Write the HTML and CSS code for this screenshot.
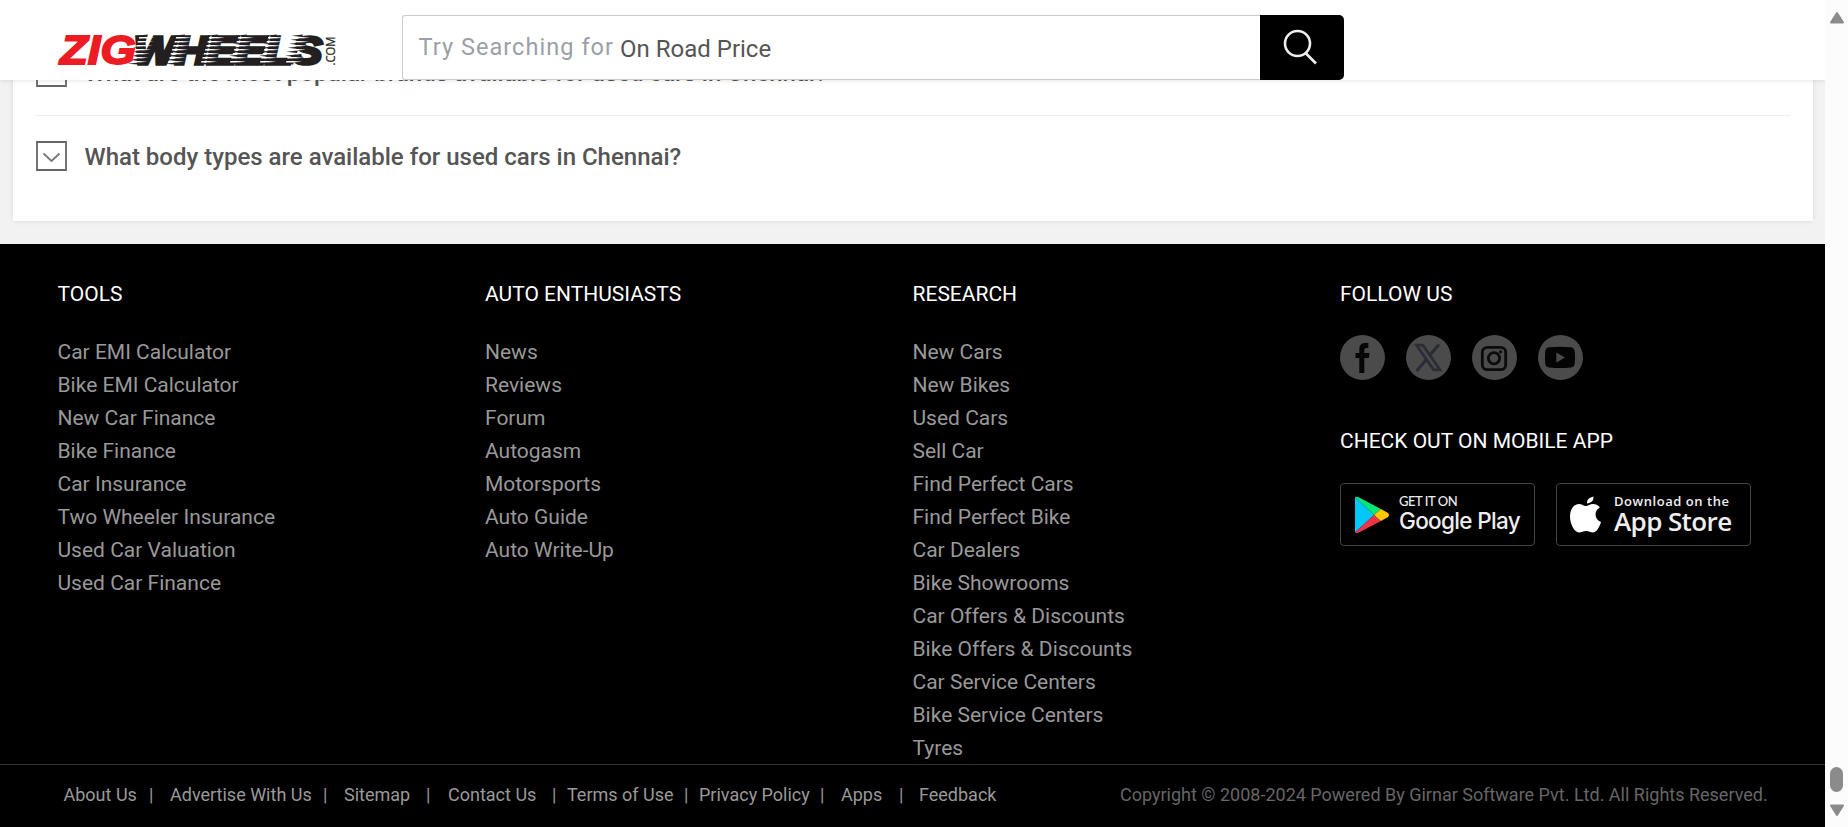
FILE: index.html
```html
<!DOCTYPE html>
<html lang="en">
<head>
<meta charset="utf-8">
<title>Used Cars in Chennai - ZigWheels</title>
<link rel="stylesheet" href="styles.css">
</head>
<body>
<div class="window">
  <div class="page">
    <header class="header">
      <svg class="logo" width="284" height="40" viewBox="0 0 284 40">
        <defs>
          <g id="comb" transform="skewX(-18)">
            <path fill="#fff" d="M-4 2.500H3L12 3.200 3 3.900H-4zM-4 6.500H3L12 7.200 3 7.900H-4zM-4 10.500H3L12 11.200 3 11.900H-4zM-4 14.500H3L12 15.200 3 15.900H-4zM-4 18.500H3L12 19.200 3 19.900H-4zM-4 22.500H3L12 23.200 3 23.900H-4zM-4 26.500H3L12 27.200 3 27.900H-4z"/>
            <path fill="#231f20" d="M-7 1.300 4 0V2.600zM-7 5.300 4 4V6.600zM-7 9.300 4 8V10.600zM-7 13.300 4 12V14.600zM-7 17.300 4 16V18.600zM-7 21.300 4 20V22.600zM-7 25.300 4 24V26.600zM-7 29.300 4 28V30z"/>
          </g>
        </defs>
        <text class="logo-wheels" x="76" y="33.500" textLength="188" lengthAdjust="spacingAndGlyphs">WHEELS</text>
        <use href="#comb" x="86" y="4.500"/><use href="#comb" x="123" y="4.500"/><use href="#comb" x="156" y="4.500"/><use href="#comb" x="185" y="4.500"/><use href="#comb" x="215" y="4.500"/><use href="#comb" x="241" y="4.500"/>
        <text class="logo-zig" x="2" y="34" textLength="76" lengthAdjust="spacingAndGlyphs">ZIG</text>
        <text class="logo-com" transform="translate(277 35.500) rotate(-90)" textLength="29" lengthAdjust="spacingAndGlyphs">.COM</text>
      </svg>
      <div class="search">
        <div class="search-field"><span class="search-hint">Try Searching for</span><span class="search-term">On Road Price</span></div>
        <div class="search-button">
          <svg width="36" height="38" viewBox="0 0 36 38" fill="none" stroke="#eee" stroke-width="2.6"><circle cx="14.5" cy="14.5" r="12.500"/><path d="M22.5 24 33 34.500"/></svg>
        </div>
      </div>
    </header>

    <main class="card">
      <div class="faq">
        <svg class="toggle" viewBox="0 0 31 30"><path d="M1 1H30V29H1z"/></svg>
        <span>What are the most popular brands available for used cars in Chennai?</span>
      </div>
      <div class="faq">
        <svg class="toggle" viewBox="0 0 31 30"><path d="M1 1H30V29H1z"/><path class="chevron" d="M7.500 12.500l8 7.500 8-7.500"/></svg>
        <span>What body types are available for used cars in Chennai?</span>
      </div>
    </main>

    <footer class="footer">
      <div class="columns">
        <section>
          <h3>TOOLS</h3>
          <ul><li>Car EMI Calculator</li><li>Bike EMI Calculator</li><li>New Car Finance</li><li>Bike Finance</li><li>Car Insurance</li><li>Two Wheeler Insurance</li><li>Used Car Valuation</li><li>Used Car Finance</li></ul>
        </section>
        <section>
          <h3>AUTO ENTHUSIASTS</h3>
          <ul><li>News</li><li>Reviews</li><li>Forum</li><li>Autogasm</li><li>Motorsports</li><li>Auto Guide</li><li>Auto Write-Up</li></ul>
        </section>
        <section>
          <h3>RESEARCH</h3>
          <ul><li>New Cars</li><li>New Bikes</li><li>Used Cars</li><li>Sell Car</li><li>Find Perfect Cars</li><li>Find Perfect Bike</li><li>Car Dealers</li><li>Bike Showrooms</li><li>Car Offers &amp; Discounts</li><li>Bike Offers &amp; Discounts</li><li>Car Service Centers</li><li>Bike Service Centers</li><li>Tyres</li></ul>
        </section>
        <section>
          <h3>FOLLOW US</h3>
          <div class="social">
            <svg viewBox="0 0 45 45"><circle cx="22.500" cy="22.500" r="22.500" fill="#4b4b4b"/><path d="M19.300 38V23H15.500V18H19.300V14.500C19.300 10 21.500 8 25.500 8H28.300V13H26.300C24.700 13 24.300 13.700 24.300 15.200V18H29.500L28.800 23H24.300V38z" fill="#060606"/></svg>
            <svg viewBox="0 0 45 45"><circle cx="22.500" cy="22.500" r="22.500" fill="#4b4b4b"/><path d="M10.500 10.200H16.800L34 34.800H27.700z" fill="none" stroke="#2a2d33" stroke-width="2.700"/><path d="M33 9.500 23.500 20.500M20.500 24.500 10.500 36" stroke="#2a2d33" stroke-width="3.200"/></svg>
            <svg viewBox="0 0 45 45"><circle cx="22.500" cy="22.500" r="22.500" fill="#4b4b4b"/><g fill="none" stroke="#0b0b0b" stroke-width="2.800"><rect x="10.300" y="12.300" width="23.400" height="22.400" rx="5"/><circle cx="22" cy="23.300" r="5.600"/></g><circle cx="28.600" cy="16.800" r="1.600" fill="#0b0b0b"/></svg>
            <svg viewBox="0 0 45 45"><circle cx="22.500" cy="22.500" r="22.500" fill="#4b4b4b"/><path d="M11 12.300Q22 11.300 33 12.300Q36.600 12.800 36.800 17Q37.300 22.500 36.800 28Q36.600 32 33 32.500Q22 33.500 11 32.500Q7.400 32 7.200 28Q6.700 22.500 7.200 17Q7.400 12.800 11 12.300z" fill="#040404"/><path d="M18.300 17.500V27.500L27 22.500z" fill="#4b4b4b"/></svg>
          </div>
          <h3 class="app-title">CHECK OUT ON MOBILE APP</h3>
          <div class="apps">
            <div class="badge">
              <svg width="36" height="38" viewBox="14 13 36 38"><path d="M15 14 34 32 15 49.500z" fill="#00c8fa"/><path d="M15 14Q17 13 20 15L41 26 34 32z" fill="#06e678"/><path d="M15 49.500 34 32 41 38 20 49Q17 51 15 49.500z" fill="#ee3448"/><path d="M41 26 48 30Q50 32 48 34L41 38 34 32z" fill="#ffc800"/></svg>
              <div class="badge-text google"><small>GET IT ON</small><b>Google Play</b></div>
            </div>
            <div class="badge">
              <svg width="36" height="38" viewBox="14 12 36 38"><path d="M31 19.500Q30.500 14 37.500 12.500Q38 18.500 31 19.500zM29.500 22C32 22 34 20 37 20C40 20 42.500 21.500 43.800 23.500C37.500 27 38.500 35.500 45 38C43.500 43 40.500 48.500 37 48.500C34.500 48.500 33 47 30 47C27 47 25.500 48.500 23 48.500C18.500 48.500 14 40 14 32.500C14 25 18 20 23 20C26 20 27.500 22 29.500 22z" fill="#fff"/></svg>
              <div class="badge-text apple"><small>Download on the</small><b>App Store</b></div>
            </div>
          </div>
        </section>
      </div>
      <div class="legal">
        <span>About Us</span><i>|</i><span>Advertise With Us</span><i>|</i><span>Sitemap</span><i>|</i><span>Contact Us</span><i>|</i><span>Terms of Use</span><i>|</i><span>Privacy Policy</span><i>|</i><span>Apps</span><i>|</i><span>Feedback</span><span class="copyright">Copyright © 2008-2024 Powered By Girnar Software Pvt. Ltd. All Rights Reserved.</span>
      </div>
    </footer>
  </div>
  <div class="scrollbar">
    <svg width="16" height="14" viewBox="0 0 16 14"><path d="M8 2 14 11.500H2z"/></svg>
    <div class="thumb"></div>
    <svg width="16" height="14" viewBox="0 0 16 14"><path d="M8 12 14 2.500H2z"/></svg>
  </div>
</div>
</body>
</html>
```
FILE: styles.css
```css
* { box-sizing: border-box; }
body { margin: 0; font-family: Roboto, "Liberation Sans", sans-serif; }
.window { display: flex; width: 1848px; height: 827px; overflow: hidden; }
.page { position: relative; width: 1825px; height: 827px; overflow: hidden; background: #f2f2f2; }

.header { position: absolute; z-index: 1; top: 0; left: 0; display: flex; width: 1825px; height: 80px; padding: 15px 0 0 58px; background: #fff; box-shadow: 0 1px 4px rgba(0, 0, 0, .1); }
.logo { margin: 15px 60px 0 0; overflow: visible; }
.logo-zig, .logo-wheels { font: italic bold 40px "Liberation Sans", sans-serif; }
.logo-zig { fill: #ed1c24; stroke: #ed1c24; stroke-width: 1.8px; }
.logo-wheels { font-size: 39px; fill: #231f20; stroke: #231f20; stroke-width: 3.6px; }
.logo-com { font: 12px "Open Sans", sans-serif; fill: #231f20; stroke: #231f20; stroke-width: .2px; }
.search { display: flex; width: 942px; height: 65px; }
.search-field { display: flex; align-items: baseline; width: 858px; padding: 17px 0 0 15.5px; border: 1px solid #ccc; border-right: 0; border-radius: 3px 0 0 3px; font-size: 24px; line-height: 28px; }
.search-hint { width: 201.5px; color: #9aa0a6; font-size: 23.5px; letter-spacing: 1.05px; white-space: nowrap; }
.search-term { position: relative; top: 2px; color: #555; white-space: nowrap; }
.search-button { display: flex; width: 84px; padding: 14px 0 0 23px; background: #000; border-radius: 0 5px 5px 0; }

.card { width: 1800px; height: 221px; margin-left: 13px; padding: 31px 23px 0 22px; background: #fff; box-shadow: 0 0 5px rgba(0, 0, 0, .1); }
.faq { display: flex; align-items: center; gap: 17.5px; height: 85px; padding-left: 1px; color: #555; font-size: 24px; font-weight: 500; white-space: nowrap; }
.faq:first-child { border-bottom: 1px solid #eee; }
.faq + .faq { height: 81px; }
.toggle { width: 31px; height: 30px; margin-bottom: 2px; fill: none; stroke: #666; stroke-width: 1.8; }
.chevron { stroke: #777; }

.footer { height: 583px; margin-top: 23px; background: #000; color: #999; }
.columns { display: grid; grid-template-columns: repeat(4, 427.5px); height: 520px; padding: 34px 0 0 57.5px; }
h3 { margin: 0; color: #fff; font-size: 21px; font-weight: 400; line-height: 32px; }
ul { margin: 26px 0 0; padding: 0; list-style: none; font-size: 21px; line-height: 33px; }
.social { display: flex; gap: 21px; margin-top: 25px; }
.social svg { width: 45px; height: 45px; }
.app-title { margin-top: 45px; }
.apps { display: flex; gap: 21px; margin-top: 26px; }
.badge { display: flex; width: 195px; height: 63px; padding: 12px 0 0 13px; border: 1px solid #444; border-radius: 4px; color: #eee; }
.badge svg { flex: none; }
.badge-text { display: flex; flex-direction: column; margin-left: 9px; white-space: nowrap; }
.badge-text small { height: 13px; line-height: 11px; }
.badge-text b { line-height: 24px; }
.google small { font-family: Lato, sans-serif; font-size: 13px; font-weight: 500; letter-spacing: -.45px; }
.google b { font-family: Inter, sans-serif; font-size: 22.5px; font-weight: 500; letter-spacing: -.65px; }
.apple { margin-left: 8px; }
.apple small { font-family: "Open Sans", sans-serif; font-size: 13px; font-weight: 600; letter-spacing: .55px; }
.apple b { font-family: "Open Sans", sans-serif; font-size: 26px; font-weight: 600; letter-spacing: -.6px; }

.legal { display: grid; grid-template-columns: 85.5px 21px 153px 21px 82px 22px 104px 15px 117px 15px 121px 21px 58px 20px 201px 1fr; height: 63px; padding: 17px 0 0 63.5px; border-top: 1px solid #333; font-size: 18px; line-height: 26px; white-space: nowrap; }
.legal i { font-style: normal; }
.copyright { color: #666; }

.scrollbar { display: flex; flex-direction: column; align-items: center; width: 23px; height: 827px; padding: 11px 0 10px; background: #fcfcfc; }
.scrollbar svg { fill: #8b8b8b; stroke: #8b8b8b; stroke-width: 2; stroke-linejoin: round; }
.thumb { width: 13px; height: 25px; margin: auto 0 11px; border-radius: 7px; background: #8b8b8b; }
```
